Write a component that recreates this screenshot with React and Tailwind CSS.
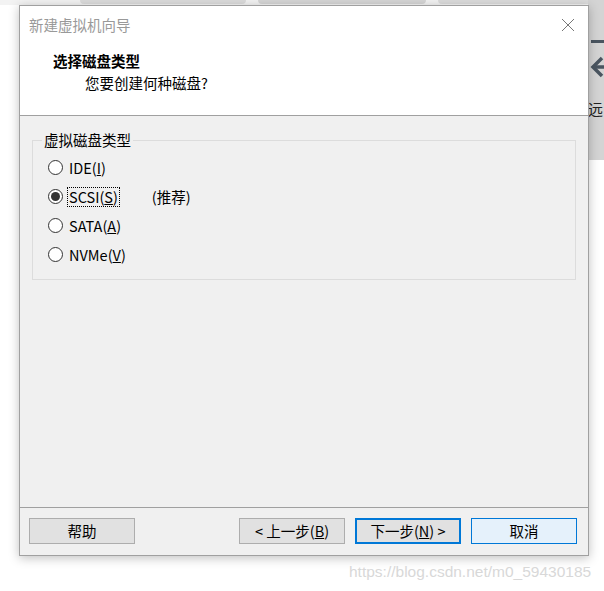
import React, { useState } from 'react';

const font = { fontFamily: '"Noto Sans CJK SC", "Noto Sans", sans-serif' };

const options = [
    { id: 'ide', label: 'IDE(', key: 'I', tail: ')' },
    { id: 'scsi', label: 'SCSI(', key: 'S', tail: ')', note: '(推荐)' },
    { id: 'sata', label: 'SATA(', key: 'A', tail: ')' },
    { id: 'nvme', label: 'NVMe(', key: 'V', tail: ')' },
];

const Radio = ({ checked }) => (
    <span className="w-[15px] h-[15px] rounded-full border border-[#333] bg-white flex items-center justify-center shrink-0">
        {checked && <span className="w-[9px] h-[9px] rounded-full bg-[#333]"></span>}
    </span>
);

const Button = ({ children, variant }) => {
    const styles = {
        plain: 'border-[#adadad] bg-[#e1e1e1]',
        primary: 'border-2 border-[#0078d7] bg-[#e1e1e1]',
        hover: 'border-[#0078d7] bg-[#e5f1fb]',
    };
    return (
        <button className={`w-[106px] h-[26px] border text-[14.5px] text-black flex items-center justify-center ${styles[variant]}`}>
            {children}
        </button>
    );
};

export default function App() {
    const [selected, setSelected] = useState('scsi');

    return (
        <div className="relative w-[604px] h-[591px] bg-white overflow-hidden" style={font}>
            {/* background tabs and side panel */}
            <div className="absolute top-0 left-0 w-full h-[5px] bg-[#f3f3f3] flex gap-[12px] pl-[80px]">
                <div className="w-[170px] h-[4px] bg-[#dcdcdc] rounded-b"></div>
                <div className="w-[172px] h-[4px] bg-[#d6d6d6] rounded-b"></div>
                <div className="w-[170px] h-[4px] bg-[#dcdcdc] rounded-b"></div>
            </div>
            <div className="absolute top-0 right-0 w-[16px] h-[160px] bg-[#d4d4d4]">
                <div className="absolute left-[3px] top-[40px] w-[13px] h-[3px] bg-[#4a5560]"></div>
                <svg className="absolute left-[2px] top-[56px]" width="14" height="22" viewBox="0 0 14 22">
                    <path d="M12 2 L3 11 L12 20" fill="none" stroke="#4a5560" strokeWidth="3.5" />
                    <path d="M4 11 H14" stroke="#4a5560" strokeWidth="3.5" />
                </svg>
                <span className="absolute left-[0px] top-[101px] text-[15px] leading-none text-[#222]">远</span>
            </div>

            {/* dialog window */}
            <div className="absolute left-[19px] top-[5px] w-[570px] h-[551px] border border-[#a0a0a0] bg-[#f0f0f0] flex flex-col shadow-[0_2px_10px_rgba(0,0,0,0.25)]">
                <div className="bg-white h-[110px] border-b border-[#a0a0a0] flex flex-col">
                    <div className="h-[37px] flex items-center justify-between pl-[9px] pr-[13px]">
                        <span className="text-[14.5px] text-[#999]">新建虚拟机向导</span>
                        <svg width="14" height="14" viewBox="0 0 14 14">
                            <path d="M1 1 L13 13 M13 1 L1 13" stroke="#777" strokeWidth="1" />
                        </svg>
                    </div>
                    <div className="pl-[33px] pt-[7px] text-[14.5px] leading-[22px] font-bold text-black">选择磁盘类型</div>
                    <div className="pl-[65px] text-[14.5px] leading-[22px] text-black">您要创建何种磁盘?</div>
                </div>

                <div className="flex-1 px-[12px] pt-[15px]">
                    <fieldset className="border border-[#dcdcdc] h-[149px] px-[15px] pt-[9px]">
                        <legend className="px-[2px] ml-[-6px] text-[14.5px] leading-[18px] text-black">虚拟磁盘类型</legend>
                        <div className="flex flex-col gap-[10px]">
                            {options.map((o) => (
                                <label key={o.id} className="flex items-center h-[19px] text-[14.5px] text-black cursor-default" onClick={() => setSelected(o.id)}>
                                    <Radio checked={selected === o.id} />
                                    <span className={`ml-[5px] px-[1px] leading-[18px] ${selected === o.id ? 'outline outline-1 outline-dotted outline-black' : ''}`}>
                                        {o.label}<span className="underline">{o.key}</span>{o.tail}
                                    </span>
                                    {o.note && <span className="ml-[33px]">{o.note}</span>}
                                </label>
                            ))}
                        </div>
                    </fieldset>
                </div>

                <div className="h-[48px] border-t border-[#a0a0a0] flex items-center pl-[9px] pr-[11px] pb-[1px]">
                    <Button variant="plain">帮助</Button>
                    <div className="flex-1"></div>
                    <div className="flex gap-[10px]">
                        <Button variant="plain">&lt; 上一步(<span className="underline">B</span>)</Button>
                        <Button variant="primary">下一步(<span className="underline">N</span>) &gt;</Button>
                        <Button variant="hover">取消</Button>
                    </div>
                </div>
            </div>

            <div className="absolute left-[349px] top-[562px] whitespace-nowrap text-[15.5px] leading-[20px] text-[#d8d8d8]" style={{ fontFamily: '"Liberation Sans", sans-serif' }}>
                https://blog.csdn.net/m0_59430185
            </div>
        </div>
    );
}
